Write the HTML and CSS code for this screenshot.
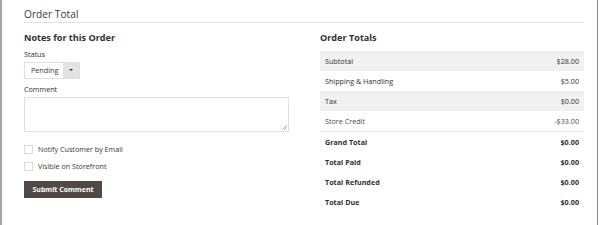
FILE: index.html
```html
<!DOCTYPE html>
<html lang="en">
  <head>
    <meta charset="UTF-8" />
    <title>Order Total</title>
    <link rel="stylesheet" href="styles.css">
  </head>
  <body>
    <div class="page">
      <div class="section-title">Order Total</div>

      <div class="columns">
        <!-- 左侧：备注 -->
        <div class="notes">
          <div class="block-title">Notes for this Order</div>

          <div class="field-label">Status</div>
          <div class="select">
            <span class="select-value">Pending</span>
            <span class="select-arrow"></span>
          </div>

          <div class="field-label">Comment</div>
          <div class="textarea">
            <svg class="resize" width="5" height="5" viewBox="0 0 5 5">
              <path d="M0.5,4.5L4.5,0.5M2.5,4.5L4.5,2.5" stroke="#8a8a8a" stroke-width="0.8" fill="none"></path>
            </svg>
          </div>

          <label class="check">
            <span class="check-box"></span>
            <span>Notify Customer by Email</span>
          </label>
          <label class="check">
            <span class="check-box"></span>
            <span>Visible on Storefront</span>
          </label>

          <button class="btn-submit">Submit Comment</button>
        </div>

        <!-- 右侧：合计 -->
        <div class="totals">
          <div class="block-title">Order Totals</div>
          <table class="totals-table">
            <tr class="row-odd"><td>Subtotal</td><td class="amount">$28.00</td></tr>
            <tr><td>Shipping &amp; Handling</td><td class="amount">$5.00</td></tr>
            <tr class="row-odd"><td>Tax</td><td class="amount">$0.00</td></tr>
            <tr class="row-last"><td>Store Credit</td><td class="amount">-$33.00</td></tr>
            <tr class="row-strong"><td>Grand Total</td><td class="amount">$0.00</td></tr>
            <tr class="row-strong"><td>Total Paid</td><td class="amount">$0.00</td></tr>
            <tr class="row-strong"><td>Total Refunded</td><td class="amount">$0.00</td></tr>
            <tr class="row-strong"><td>Total Due</td><td class="amount">$0.00</td></tr>
          </table>
        </div>
      </div>
    </div>
  </body>
</html>
```

FILE: styles.css
```css
body {
  margin: 0;
  padding: 0;
  background-color: #ffffff;
  color: #303030;
  font: 7.2px/9px 'Open Sans', sans-serif;
}

.page {
  box-sizing: border-box;
  width: 598px;
  height: 225px;
  border-left: 2px solid #a4a6ae;
  border-right: 1px solid #8d8d8d;
  padding: 8px 13px 0 22px;
}

.section-title {
  font-size: 10.2px;
  line-height: 13px;
  color: #41362f;
  padding-bottom: 1px;
  border-bottom: 1px solid #e3e3e3;
}

.columns {
  display: flex;
  justify-content: space-between;
  padding-top: 9px;
}

.notes {
  width: 265px;
}

.totals {
  width: 264px;
}

.block-title {
  font-size: 9.1px;
  line-height: 11px;
  font-weight: 700;
  color: #303030;
  margin-bottom: 7px;
}

.totals .block-title {
  margin-bottom: 8px;
}

.field-label {
  color: #303030;
  margin-bottom: 3px;
}

.select {
  display: flex;
  width: 56px;
  height: 17px;
  box-sizing: border-box;
  border: 1px solid #e0e0e0;
  margin-bottom: 6px;
}

.select-value {
  flex: 1;
  padding-left: 6px;
  line-height: 15px;
  color: #41362f;
}

.select-arrow {
  width: 16px;
  background-color: #e3e3e3;
  position: relative;
}

.select-arrow::after {
  content: '';
  position: absolute;
  left: 6px;
  top: 6px;
  border-left: 2px solid transparent;
  border-right: 2px solid transparent;
  border-top: 2px solid #41362f;
}

.textarea {
  position: relative;
  height: 35px;
  box-sizing: border-box;
  border: 1px solid #e0e0e0;
  margin-bottom: 13px;
}

.textarea .resize {
  position: absolute;
  right: 1px;
  bottom: 1px;
}

.check {
  display: flex;
  align-items: center;
  gap: 5px;
  color: #41362f;
  margin-bottom: 8px;
}

.check-box {
  width: 9px;
  height: 9px;
  box-sizing: border-box;
  border: 1px solid #dcdcdc;
}

.btn-submit {
  display: block;
  width: 78px;
  height: 17px;
  padding: 0;
  border: 0;
  background-color: #514943;
  color: #ffffff;
  font: 700 7px 'Open Sans', sans-serif;
  margin-top: 10px;
}

.totals-table {
  width: 100%;
  border-collapse: collapse;
}

.totals-table td {
  height: 20px;
  padding: 0 5px;
  color: #303030;
}

.totals-table .amount {
  text-align: right;
}

.totals-table .row-odd td {
  background-color: #f1f1f1;
}

.totals-table .row-last td {
  color: #514943;
  border-bottom: 1px solid #e8e8e8;
}

.totals-table .row-strong td {
  font-weight: 700;
}
```
